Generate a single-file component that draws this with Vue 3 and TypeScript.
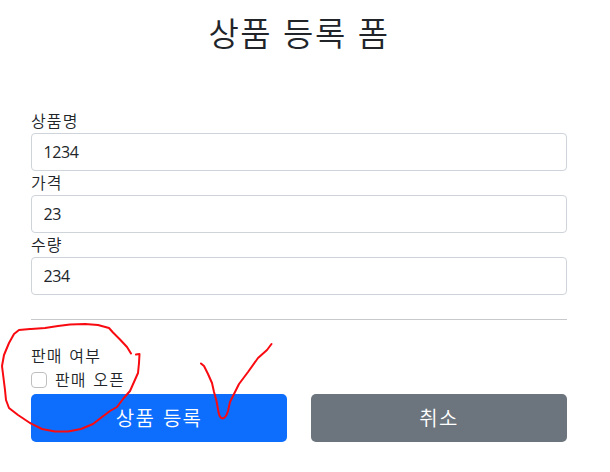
<script setup lang="ts">
import { ref } from 'vue'

interface Field {
  id: string
  label: string
  value: string
}

const fields = ref<Field[]>([
  { id: 'itemName', label: '상품명', value: '1234' },
  { id: 'price', label: '가격', value: '23' },
  { id: 'quantity', label: '수량', value: '234' },
])
const open = ref(false)
</script>

<template>
  <main class="container">
    <h2 class="title">상품 등록 폼</h2>
    <form @submit.prevent>
      <div v-for="field in fields" :key="field.id">
        <label class="label" :for="field.id">{{ field.label }}</label>
        <input :id="field.id" v-model="field.value" class="control" type="text" />
      </div>
      <hr class="divider" />
      <div class="label">판매 여부</div>
      <div class="check">
        <input id="open" v-model="open" class="check-input" type="checkbox" />
        <label class="check-label" for="open">판매 오픈</label>
      </div>
      <div class="actions">
        <button class="btn primary" type="submit">상품 등록</button>
        <button class="btn secondary" type="button">취소</button>
      </div>
    </form>
    <svg class="ink" viewBox="0 0 610 472" aria-hidden="true">
      <path d="M131 353.5 L127 347 L120 339.500 L113 332.500 L109 328 L98 325 L85 324 L70 324.500 L58 326 L45 328 L30 329 L19 330 L14 334 L9 343 L4 355 L2 366 L3.500 378 L5 390 L6 400 L9 408 L18 415 L30 423 L42 429 L55 431.500 L68 431.500 L81 429 L93 424 L102 417 L110 411 L117 407 L123 399 L130 391 L134 382 L138 373 L139 363 L139.500 354 L136 354.500" />
      <path d="M201 363.500 L204 366 L208 374 L212 383 L214 392 L216.500 401 L218.500 412 Q219.500 418 222.500 418.500 Q226 418 228 411 L230 402 L234 394 L239 384 L248 372 L258 358 L267 350 L271.500 344" />
    </svg>
  </main>
</template>

<style>
body {
  margin: 0;
  background: #fff;
}
</style>

<style scoped>
.container {
  box-sizing: border-box;
  width: 598px;
  height: 472px;
  padding: 13px 31px 0;
  overflow: hidden;
  color: #212529;
  font: 350 16px/24px "Noto Sans CJK KR", sans-serif;
}
.title {
  height: 38px;
  margin: 0 0 58px;
  text-align: center;
  font-size: 33px;
  font-weight: 350;
  line-height: 38px;
  letter-spacing: 1.5px;
  word-spacing: 2px;
}
.label {
  display: block;
  height: 24px;
  line-height: 22px;
  letter-spacing: 1.1px;
  word-spacing: 2px;
}
.control {
  box-sizing: border-box;
  display: block;
  width: 100%;
  height: 38px;
  padding: 6px 11.5px;
  border: 1px solid #ced4da;
  border-radius: 4px;
  outline: none;
  background: #fff;
  color: #212529;
  font: 400 16px/24px "Open Sans", sans-serif;
  letter-spacing: -0.4px;
}
.divider {
  height: 1px;
  margin: 24px 0;
  border: 0;
  background: #c8c9ca;
}
.check {
  display: flex;
  height: 24px;
  margin-bottom: 2px;
  gap: 8px;
}
.check-input {
  box-sizing: border-box;
  appearance: none;
  width: 16px;
  height: 16px;
  margin: 4px 0 0;
  border: 1px solid #bfbfbf;
  border-radius: 4px;
  background: #fff;
}
.check-input:checked {
  background: #0d6efd;
}
.check-label {
  line-height: 22px;
  letter-spacing: 1.1px;
  word-spacing: 2px;
}
.actions {
  display: grid;
  grid-template-columns: 1fr 1fr;
  gap: 24px;
}
.btn {
  height: 48px;
  padding: 8px 16px;
  border: 0;
  border-radius: 5px;
  color: #fff;
  font: 350 20px/30px "Noto Sans CJK KR", sans-serif;
  letter-spacing: 1.3px;
  word-spacing: 2px;
}
.primary {
  background: #0d6efd;
}
.secondary {
  background: #6c757d;
}
.ink {
  position: absolute;
  top: 0;
  left: 0;
  width: 610px;
  height: 472px;
  pointer-events: none;
  fill: none;
  stroke: #f90a10;
  stroke-width: 2;
  stroke-linecap: round;
  stroke-linejoin: round;
}
</style>
